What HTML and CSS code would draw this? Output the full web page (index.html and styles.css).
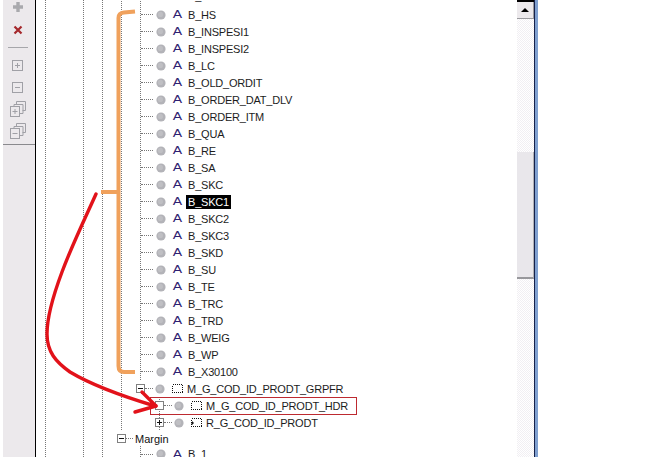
FILE: index.html
```html
<!DOCTYPE html>
<html lang="en">
  <head>
    <meta charset="UTF-8" />
    <title>Model tree</title>
    <link rel="stylesheet" href="styles.css">
  </head>
  <body>
    <svg class="defs" width="0" height="0">
      <symbol id="dot" viewBox="0 0 10 10"><circle cx="5" cy="5" r="4.6" fill="#b3b3b8"/><circle cx="4.4" cy="4.4" r="2.6" fill="#bfbfc3"/></symbol>
      <symbol id="plus" viewBox="0 0 9 9"><rect x=".5" y=".5" width="8" height="8" fill="#fff" stroke="#808080"/><path d="M2 4.5h5M4.5 2v5" stroke="#111"/></symbol>
      <symbol id="minus" viewBox="0 0 9 9"><rect x=".5" y=".5" width="8" height="8" fill="#fff" stroke="#808080"/><path d="M2 4.5h5" stroke="#111"/></symbol>
      <symbol id="empty" viewBox="0 0 9 9"><rect x=".5" y=".5" width="8" height="8" fill="#fff" stroke="#808080"/></symbol>
      <symbol id="group" viewBox="0 0 11 9"><rect x=".5" y=".5" width="10" height="8" fill="none" stroke="#111" stroke-dasharray="1 1" shape-rendering="crispEdges"/></symbol>
      <symbol id="ref" viewBox="0 0 11 9"><rect x=".5" y=".5" width="10" height="8" fill="none" stroke="#111" stroke-dasharray="1 1" shape-rendering="crispEdges"/><path d="M0 5h3M1.5 3.500v3" stroke="#111"/></symbol>
    </svg>

    <div class="tools">
      <div class="tool tool-top">
        <svg width="14" height="14" viewBox="0 0 14 14"><path d="M7 2v10M2 7h10" stroke="#a9a9ad" stroke-width="3.4"/></svg>
      </div>
      <div class="tool tool-del">
        <svg width="10" height="10" viewBox="0 0 10 10"><path d="M1.500 1.500l7 7M8.500 1.500l-7 7" stroke="#a5282c" stroke-width="2.2"/></svg>
      </div>
      <div class="tool-rule"></div>
      <div class="tool">
        <svg width="11" height="11" viewBox="0 0 11 11"><rect x=".5" y=".5" width="10" height="10" fill="none" stroke="#a0a0a6"/><path d="M3 5.500h5M5.500 3v5" stroke="#a0a0a6"/></svg>
      </div>
      <div class="tool">
        <svg width="11" height="11" viewBox="0 0 11 11"><rect x=".5" y=".5" width="10" height="10" fill="none" stroke="#a0a0a6"/><path d="M3 5.500h5" stroke="#a0a0a6"/></svg>
      </div>
      <div class="tool">
        <svg width="16" height="16" viewBox="0 0 16 16"><path d="M6.500 3.500v-3h9v9h-3M4 6.500v-3h9v9h-3" fill="none" stroke="#a0a0a6"/><rect x=".5" y="5.500" width="9" height="10" fill="#ece9ec" stroke="#a0a0a6"/><path d="M2.500 10.500h5M5 8v5" stroke="#a0a0a6"/></svg>
      </div>
      <div class="tool">
        <svg width="16" height="16" viewBox="0 0 16 16"><path d="M6.500 3.500v-3h9v9h-3M4 6.500v-3h9v9h-3" fill="none" stroke="#a0a0a6"/><rect x=".5" y="5.500" width="9" height="10" fill="#ece9ec" stroke="#a0a0a6"/><path d="M2.500 10.500h5" stroke="#a0a0a6"/></svg>
      </div>
      <div class="tool-end"></div>
    </div>

    <div class="tree">
      <div class="branch-top">
        <div class="branch branch-b">
          <div class="row leaf row-cut"><i class="stub"></i><svg class="dot"><use href="#dot"/></svg><span class="attr">A</span><span class="name">B_G</span></div>
          <div class="row leaf"><i class="stub"></i><svg class="dot"><use href="#dot"/></svg><span class="attr">A</span><span class="name">B_HS</span></div>
          <div class="row leaf"><i class="stub"></i><svg class="dot"><use href="#dot"/></svg><span class="attr">A</span><span class="name">B_INSPESI1</span></div>
          <div class="row leaf"><i class="stub"></i><svg class="dot"><use href="#dot"/></svg><span class="attr">A</span><span class="name">B_INSPESI2</span></div>
          <div class="row leaf"><i class="stub"></i><svg class="dot"><use href="#dot"/></svg><span class="attr">A</span><span class="name">B_LC</span></div>
          <div class="row leaf"><i class="stub"></i><svg class="dot"><use href="#dot"/></svg><span class="attr">A</span><span class="name">B_OLD_ORDIT</span></div>
          <div class="row leaf"><i class="stub"></i><svg class="dot"><use href="#dot"/></svg><span class="attr">A</span><span class="name">B_ORDER_DAT_DLV</span></div>
          <div class="row leaf"><i class="stub"></i><svg class="dot"><use href="#dot"/></svg><span class="attr">A</span><span class="name">B_ORDER_ITM</span></div>
          <div class="row leaf"><i class="stub"></i><svg class="dot"><use href="#dot"/></svg><span class="attr">A</span><span class="name">B_QUA</span></div>
          <div class="row leaf"><i class="stub"></i><svg class="dot"><use href="#dot"/></svg><span class="attr">A</span><span class="name">B_RE</span></div>
          <div class="row leaf"><i class="stub"></i><svg class="dot"><use href="#dot"/></svg><span class="attr">A</span><span class="name">B_SA</span></div>
          <div class="row leaf"><i class="stub"></i><svg class="dot"><use href="#dot"/></svg><span class="attr">A</span><span class="name">B_SKC</span></div>
          <div class="row leaf"><i class="stub"></i><svg class="dot"><use href="#dot"/></svg><span class="attr">A</span><span class="name selected">B_SKC1</span></div>
          <div class="row leaf"><i class="stub"></i><svg class="dot"><use href="#dot"/></svg><span class="attr">A</span><span class="name">B_SKC2</span></div>
          <div class="row leaf"><i class="stub"></i><svg class="dot"><use href="#dot"/></svg><span class="attr">A</span><span class="name">B_SKC3</span></div>
          <div class="row leaf"><i class="stub"></i><svg class="dot"><use href="#dot"/></svg><span class="attr">A</span><span class="name">B_SKD</span></div>
          <div class="row leaf"><i class="stub"></i><svg class="dot"><use href="#dot"/></svg><span class="attr">A</span><span class="name">B_SU</span></div>
          <div class="row leaf"><i class="stub"></i><svg class="dot"><use href="#dot"/></svg><span class="attr">A</span><span class="name">B_TE</span></div>
          <div class="row leaf"><i class="stub"></i><svg class="dot"><use href="#dot"/></svg><span class="attr">A</span><span class="name">B_TRC</span></div>
          <div class="row leaf"><i class="stub"></i><svg class="dot"><use href="#dot"/></svg><span class="attr">A</span><span class="name">B_TRD</span></div>
          <div class="row leaf"><i class="stub"></i><svg class="dot"><use href="#dot"/></svg><span class="attr">A</span><span class="name">B_WEIG</span></div>
          <div class="row leaf"><i class="stub"></i><svg class="dot"><use href="#dot"/></svg><span class="attr">A</span><span class="name">B_WP</span></div>
          <div class="row leaf"><i class="stub"></i><svg class="dot"><use href="#dot"/></svg><span class="attr">A</span><span class="name">B_X30100</span></div>
        </div>
        <div class="row group"><svg class="exp"><use href="#minus"/></svg><i class="stub stub-sm"></i><svg class="dot"><use href="#dot"/></svg><svg class="box"><use href="#group"/></svg><span class="name">M_G_COD_ID_PRODT_GRPFR</span></div>
        <div class="branch-g">
          <div class="row child"><svg class="exp"><use href="#empty"/></svg><i class="stub stub-sm"></i><svg class="dot"><use href="#dot"/></svg><svg class="box"><use href="#group"/></svg><span class="name">M_G_COD_ID_PRODT_HDR</span></div>
          <div class="row child"><svg class="exp"><use href="#plus"/></svg><i class="stub stub-sm"></i><svg class="dot"><use href="#dot"/></svg><svg class="box"><use href="#ref"/></svg><span class="name">R_G_COD_ID_PRODT</span></div>
        </div>
      </div>
      <div class="row margin"><svg class="exp"><use href="#minus"/></svg><i class="stub stub-xs"></i><span class="title">Margin</span></div>
      <div class="branch branch-m">
        <div class="row leaf"><i class="stub"></i><svg class="dot"><use href="#dot"/></svg><span class="attr">A</span><span class="name">B_1</span></div>
      </div>
    </div>

    <div class="scroll">
      <div class="scroll-btn"><i class="arrow"></i></div>
      <div class="scroll-thumb"></div>
    </div>
    <div class="edge"></div>
    <div class="blank"></div>

    <svg class="notes" width="668" height="457" viewBox="0 0 668 457">
      <g fill="none" stroke="#f0a15c" stroke-width="4">
        <path d="M135 11.500L124 12.500Q118.500 13 118.500 18V366Q118.500 372 124 372H135"/>
        <path d="M101 192H118"/>
      </g>
      <rect x="150.500" y="397.500" width="206" height="17" fill="none" stroke="#bd2a30"/>
      <g fill="none" stroke="#e2121a" stroke-width="3.4" stroke-linecap="round">
        <path d="M96 194C88 212 72 245 62 272C53 296 47 316 47 334C47 352 56 362 70 372C90 384 125 397 155 406"/>
        <path d="M142 392L156 406"/>
        <path d="M135 412L156 406"/>
      </g>
    </svg>
  </body>
</html>
```

FILE: styles.css
```css
html,
body {
  margin: 0;
  padding: 0;
}
body {
  display: flex;
  width: 668px;
  height: 457px;
  overflow: hidden;
  background: #ffffff;
  font-family: "Liberation Sans", Arial, sans-serif;
  font-size: 11px;
  color: #111111;
}
.defs {
  display: none;
}

/* left toolbar */
.tools {
  box-sizing: border-box;
  width: 33px;
  height: 457px;
  flex: none;
  margin-left: 3px;
  padding-right: 3px;
  background: #ece9ec;
  border-right: 1px solid #000000;
  display: flex;
  flex-direction: column;
}
.tool {
  height: 22px;
  display: flex;
  justify-content: center;
  align-items: center;
}
.tool-top {
  height: 14px;
}
.tool-del {
  margin-top: 5px;
}
.tool-rule {
  height: 1px;
  margin: 6px 4px 6px 5px;
  background: #a6a6aa;
}
.tool-end {
  height: 1px;
  margin-top: 2px;
  margin-right: -3px;
  background: #8a8a8e;
}

/* tree */
.tree {
  width: 481px;
  height: 457px;
  flex: none;
  overflow: hidden;
  background-image:
    linear-gradient(#777777 50%, transparent 50%),
    linear-gradient(#777777 50%, transparent 50%),
    linear-gradient(#777777 50%, transparent 50%);
  background-size: 1px 2px;
  background-repeat: repeat-y;
  background-position: 9px 0, 47px 0, 66px 0;
}
.branch-top,
.branch,
.branch-g {
  background-image: linear-gradient(#777777 50%, transparent 50%);
  background-size: 1px 2px;
  background-repeat: repeat-y;
}
.branch-top {
  background-position: 85px 0;
}
.branch {
  background-position: 104px 0;
}
.branch-g {
  background-position: 123px 0;
}
.branch-b {
  margin-top: -11px;
}
.row {
  height: 17px;
  display: flex;
  align-items: center;
  white-space: nowrap;
}
.leaf {
  padding-left: 105px;
}
.row-cut {
  box-sizing: border-box;
  padding-top: 1px;
  align-items: flex-start;
}
.row-cut .name {
  padding-top: 0;
}
.group {
  padding-left: 100px;
}
.child {
  padding-left: 119px;
}
.margin {
  height: 15px;
  padding-left: 81px;
}
.branch-m .row {
  height: 16px;
}
.stub {
  width: 12px;
  height: 0;
  flex: none;
  margin-right: 3px;
  border-top: 1px dotted #777777;
}
.stub-sm {
  width: 8px;
  margin-right: 2px;
}
.stub-xs {
  width: 7px;
  margin-right: 0;
}
.exp {
  width: 9px;
  height: 9px;
  flex: none;
}
.dot {
  width: 10px;
  height: 10px;
  flex: none;
}
.attr {
  width: 11px;
  margin-left: 6px;
  margin-right: 3px;
  flex: none;
  text-align: center;
  font-family: "DejaVu Sans", sans-serif;
  font-size: 11px;
  color: #2f2070;
  transform: scaleX(1.25);
}
.box {
  width: 11px;
  height: 9px;
  margin-left: 7px;
  margin-right: 2px;
  flex: none;
}
.name {
  padding: 1px 2px;
  letter-spacing: -0.2px;
  color: #1c1c1c;
}
.name.selected {
  background: #000000;
  color: #ffffff;
}
.title {
  margin-left: 2px;
}

/* scrollbar and window edge */
.scroll {
  width: 17px;
  flex: none;
  border-top: 2px solid #000000;
  background-image: repeating-conic-gradient(#f1eff3 0 25%, #ffffff 0 50%);
  background-size: 2px 2px;
  display: flex;
  flex-direction: column;
}
.scroll-btn {
  box-sizing: border-box;
  height: 17px;
  background: #ece9ec;
  border-right: 1px solid #9a9a9e;
  border-bottom: 1px solid #9a9a9e;
  display: flex;
  justify-content: center;
  align-items: center;
}
.arrow {
  width: 0;
  height: 0;
  border-left: 4px solid transparent;
  border-right: 4px solid transparent;
  border-bottom: 4px solid #000000;
}
.scroll-thumb {
  box-sizing: border-box;
  height: 127px;
  margin-top: 133px;
  background: #e9e7eb;
  border-right: 1px solid #b0b0b4;
  border-bottom: 2px solid #98989c;
}
.edge {
  box-sizing: border-box;
  width: 4px;
  flex: none;
  background: #7f9fcf;
  border-left: 1px solid #14204a;
}
.blank {
  flex: 1;
}

/* hand drawn notes on top of the tree */
.notes {
  position: absolute;
  left: 0;
  top: 0;
  pointer-events: none;
}
```
